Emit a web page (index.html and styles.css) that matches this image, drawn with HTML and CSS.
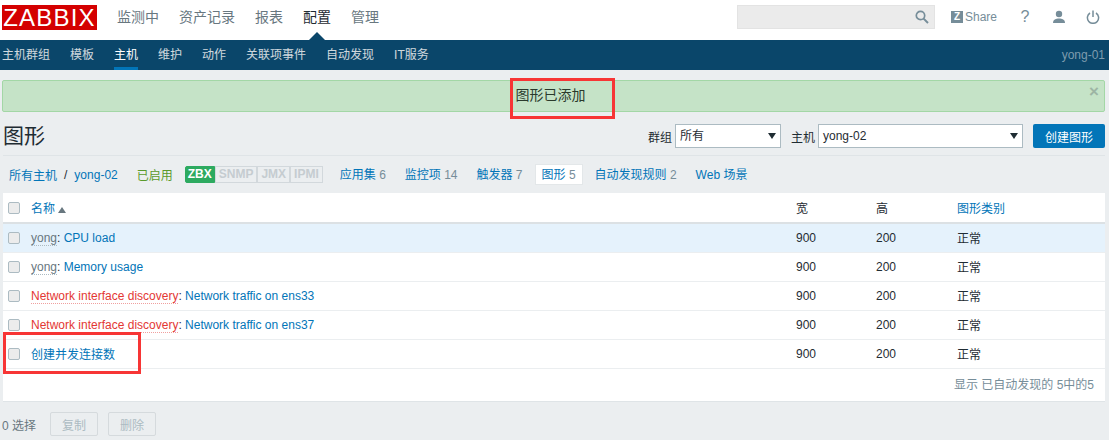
FILE: index.html
```html
<!DOCTYPE html>
<html lang="zh">
<head>
    <meta charset="UTF-8">
    <title>图形</title>
    <link rel="stylesheet" href="styles.css">
</head>
<body>
    <header class="top-bar">
        <div class="logo">ZABBIX</div>
        <nav class="top-menu">
            <a>监测中</a>
            <a>资产记录</a>
            <a>报表</a>
            <a class="active">配置</a>
            <a>管理</a>
        </nav>
        <div class="top-tools">
            <div class="search">
                <svg width="14" height="14" viewBox="0 0 14 14"><circle cx="5.5" cy="5.5" r="4.2" fill="none" stroke="#768d99" stroke-width="1.7"/><path d="M8.6 8.6 L13 13" stroke="#768d99" stroke-width="2"/></svg>
            </div>
            <a class="share"><span class="share-z">Z</span>Share</a>
            <a class="tool-icon help">?</a>
            <a class="tool-icon">
                <svg width="14" height="14" viewBox="0 0 14 14"><circle cx="7" cy="4" r="3.2" fill="#768d99"/><path d="M1 13 C1 9.2 4 8.4 7 8.4 C10 8.4 13 9.2 13 13 Z" fill="#768d99"/></svg>
            </a>
            <a class="tool-icon">
                <svg width="14" height="14" viewBox="0 0 14 14"><path d="M4 3 A5.6 5.6 0 1 0 10 3" fill="none" stroke="#768d99" stroke-width="1.5"/><path d="M7 0.5 V7" stroke="#768d99" stroke-width="1.5"/></svg>
            </a>
        </div>
    </header>

    <nav class="sub-menu">
        <a>主机群组</a>
        <a>模板</a>
        <a class="active">主机</a>
        <a>维护</a>
        <a>动作</a>
        <a>关联项事件</a>
        <a>自动发现</a>
        <a>IT服务</a>
        <span class="server-name">yong-01</span>
    </nav>

    <div class="msg-good">图形已添加<span class="msg-close">×</span></div>

    <div class="title-row">
        <h1>图形</h1>
        <div class="filters">
            <label>群组</label>
            <div class="select group-select">所有<i class="arrow"></i></div>
            <label>主机</label>
            <div class="select host-select">yong-02<i class="arrow"></i></div>
            <button class="btn-create">创建图形</button>
        </div>
    </div>

    <div class="tabs">
        <a class="crumb">所有主机</a><span class="slash">/</span><a class="crumb">yong-02</a>
        <span class="enabled">已启用</span>
        <div class="badges">
            <span class="badge on">ZBX</span><span class="badge">SNMP</span><span class="badge">JMX</span><span class="badge">IPMI</span>
        </div>
        <a class="tab">应用集 <em>6</em></a>
        <a class="tab">监控项 <em>14</em></a>
        <a class="tab">触发器 <em>7</em></a>
        <a class="tab current">图形 <em>5</em></a>
        <a class="tab">自动发现规则 <em>2</em></a>
        <a class="tab">Web 场景</a>
    </div>

    <div class="table-wrap">
        <table>
            <thead>
                <tr>
                    <th class="col-check"><span class="check"></span></th>
                    <th class="col-name"><a>名称</a><i class="sort-up"></i></th>
                    <th class="col-width">宽</th>
                    <th class="col-height">高</th>
                    <th><a>图形类别</a></th>
                </tr>
            </thead>
            <tbody>
                <tr class="hover">
                    <td><span class="check"></span></td>
                    <td><a class="parent">yong</a>: <a>CPU load</a></td>
                    <td>900</td><td>200</td><td>正常</td>
                </tr>
                <tr>
                    <td><span class="check"></span></td>
                    <td><a class="parent">yong</a>: <a>Memory usage</a></td>
                    <td>900</td><td>200</td><td>正常</td>
                </tr>
                <tr>
                    <td><span class="check"></span></td>
                    <td><a class="parent red">Network interface discovery</a>: <a>Network traffic on ens33</a></td>
                    <td>900</td><td>200</td><td>正常</td>
                </tr>
                <tr>
                    <td><span class="check"></span></td>
                    <td><a class="parent red">Network interface discovery</a>: <a>Network traffic on ens37</a></td>
                    <td>900</td><td>200</td><td>正常</td>
                </tr>
                <tr>
                    <td><span class="check"></span></td>
                    <td><a>创建并发连接数</a></td>
                    <td>900</td><td>200</td><td>正常</td>
                </tr>
            </tbody>
        </table>
        <div class="table-stats">显示 已自动发现的 5中的5</div>
    </div>

    <div class="actions">
        <span>0 选择</span>
        <button disabled>复制</button>
        <button disabled>删除</button>
    </div>

    <!-- red marks drawn over the screenshot -->
    <div class="mark mark-msg"></div>
    <div class="mark mark-row"></div>
</body>
</html>
```

FILE: styles.css
```css
* {
    box-sizing: border-box;
}
body {
    margin: 0;
    height: 440px;
    overflow: hidden;
    position: relative;
    background: #ebeef0;
    color: #1f2c33;
    font-family: "Liberation Sans", Arial, "Noto Sans CJK SC", sans-serif;
    font-size: 12px;
}
a {
    color: #0275b8;
}

/* top bar */
.top-bar {
    height: 40px;
    background: #fff;
    display: flex;
    align-items: flex-start;
    padding-left: 2px;
}
.logo {
    width: 95px;
    height: 25px;
    margin-top: 5px;
    background: #d40000;
    color: #fff;
    font-size: 24px;
    line-height: 25px;
    text-align: center;
    letter-spacing: 1.2px;
}
.top-menu {
    display: flex;
    gap: 20px;
    margin-left: 20px;
    line-height: 34px;
    font-size: 14px;
}
.top-menu a {
    color: #68777f;
    position: relative;
    height: 40px;
}
.top-menu a.active {
    color: #1f2c33;
}
.top-menu a.active::after {
    content: "";
    position: absolute;
    left: 50%;
    bottom: 0;
    margin-left: -8px;
    border: 8px solid transparent;
    border-top: 0;
    border-bottom-color: #0a466a;
}
.top-tools {
    margin-left: auto;
    display: flex;
    align-items: center;
    height: 34px;
}
.search {
    width: 198px;
    height: 24px;
    background: #ebebeb;
    border: 1px solid #e3e3e3;
    display: flex;
    align-items: center;
    justify-content: flex-end;
    padding-right: 5px;
}
.share {
    display: flex;
    align-items: center;
    margin-left: 16px;
    color: #768d99;
    font-size: 12px;
}
.share-z {
    width: 12px;
    height: 12px;
    margin-right: 2px;
    background: #768d99;
    color: #fff;
    font-size: 10px;
    font-weight: bold;
    line-height: 12px;
    text-align: center;
}
.tool-icon {
    display: flex;
    justify-content: center;
    width: 14px;
    margin-left: 20px;
    color: #768d99;
}
.tool-icon.help {
    margin-left: 21px;
    font-size: 16px;
}
.tool-icon:last-child {
    margin-right: 9px;
}

/* second level menu */
.sub-menu {
    height: 30px;
    background: #0a466a;
    display: flex;
    gap: 20px;
    padding-left: 2px;
    line-height: 31px;
    font-size: 12px;
}
.sub-menu a {
    color: #f2f2f2;
    opacity: 0.85;
    height: 30px;
}
.sub-menu a.active {
    opacity: 1;
    color: #fff;
    border-bottom: 3px solid #0275b8;
}
.server-name {
    margin-left: auto;
    margin-right: 4px;
    color: #7e9cae;
}

/* message */
.msg-good {
    position: relative;
    margin: 10px 4px 0 2px;
    height: 32px;
    padding-right: 6px;
    background: #c5e3c7;
    border: 1px solid #a3d7a6;
    border-radius: 2px;
    line-height: 29px;
    text-align: center;
    font-size: 14px;
    color: #2a3a2c;
}
.msg-close {
    position: absolute;
    right: 5px;
    top: -4px;
    color: #9db5a4;
    font-size: 17px;
    font-weight: bold;
}

/* title and filters */
.title-row {
    display: flex;
    justify-content: space-between;
    align-items: flex-start;
    height: 44px;
    padding-top: 12px;
    margin: 0 4px 0 3px;
    border-bottom: 1px solid #dfe4e7;
}
h1 {
    margin: 0;
    font-size: 21px;
    line-height: 24px;
    font-weight: normal;
}
.filters {
    display: flex;
    align-items: center;
    font-size: 12px;
    color: #1f2c33;
}
.filters label {
    margin-right: 3px;
}
.select {
    position: relative;
    height: 24px;
    background: #fff;
    border: 1px solid #acbbc2;
    line-height: 22px;
    padding-left: 4px;
    color: #1f2c33;
}
.group-select {
    width: 106px;
    margin-right: 10px;
}
.host-select {
    width: 205px;
    margin-right: 10px;
}
.arrow {
    position: absolute;
    right: 4px;
    top: 8px;
    border: 4px solid transparent;
    border-top: 6px solid #1f2c33;
    border-bottom: 0;
}
.btn-create {
    width: 72px;
    height: 24px;
    padding: 0;
    border: 0;
    border-radius: 2px;
    background: #0275b8;
    color: #fff;
    font: inherit;
}

/* host tabs */
.tabs {
    display: flex;
    align-items: center;
    height: 37px;
    padding-left: 9px;
    font-size: 12px;
}
.slash {
    margin: 0 7px;
    color: #1f2c33;
}
.enabled {
    margin-left: 19px;
    color: #5a9a2c;
}
.badges {
    display: flex;
    margin-left: 12px;
    margin-right: 5px;
}
.badge {
    height: 17px;
    padding: 0 3px;
    border: 1px solid #d2d8dc;
    color: #c5ccd0;
    font-weight: bold;
    font-size: 12px;
    line-height: 15px;
}
.badge.on {
    padding: 0 2px;
    background: #2daa60;
    border-color: #2daa60;
    color: #fff;
    border-radius: 2px 0 0 2px;
}
.tab {
    height: 21px;
    line-height: 20px;
    padding: 0 6px;
    margin-left: 5px;
    border: 1px solid transparent;
}
.tab.current {
    background: #fff;
    border-color: #e3e7e9;
}
.tab em {
    font-style: normal;
    color: #768d99;
}

/* table */
.table-wrap {
    margin: 0 4px 0 3px;
    background: #fff;
    border-bottom: 1px solid #dfe4e7;
    height: 209px;
}
table {
    width: 100%;
    border-collapse: collapse;
    table-layout: fixed;
    font-size: 12px;
}
th {
    height: 30px;
    text-align: left;
    font-weight: normal;
    border-bottom: 2px solid #dce1e4;
    padding: 0;
    color: #1f2c33;
}
th.col-check {
    width: 28px;
}
th.col-name {
    width: 765px;
}
th.col-width {
    width: 80px;
}
th.col-height {
    width: 81px;
}
td {
    height: 29px;
    padding: 0;
    border-bottom: 1px solid #ebeef0;
}
.hover td {
    background: #e5f2fc;
}
.check {
    display: block;
    width: 12px;
    height: 12px;
    margin-left: 5px;
    background: #ececec;
    border: 1px solid #acbbc2;
    border-radius: 2px;
}
.parent {
    color: #68777f;
    border-bottom: 1px dotted #acbbc2;
}
.parent.red {
    color: #e33734;
    border-bottom-color: #f0a09f;
}
.sort-up {
    display: inline-block;
    margin-left: 3px;
    border: 4px solid transparent;
    border-top: 0;
    border-bottom: 6px solid #68777f;
}
.table-stats {
    height: 32px;
    line-height: 32px;
    padding-right: 11px;
    text-align: right;
    color: #768d99;
}

/* bottom actions */
.actions {
    display: flex;
    align-items: center;
    gap: 10px;
    height: 24px;
    margin-top: 10px;
    padding-left: 2px;
    color: #68777f;
}
.actions span {
    margin-right: 4px;
}
.actions button {
    width: 48px;
    height: 24px;
    padding: 0;
    background: #ebeef0;
    border: 1px solid #d5dadd;
    border-radius: 2px;
    color: #acbbc2;
    font: inherit;
}

/* annotations */
.mark {
    position: absolute;
    border: 3px solid #f73535;
}
.mark-msg {
    left: 510px;
    top: 78px;
    width: 105px;
    height: 41px;
}
.mark-row {
    left: 3px;
    top: 332px;
    width: 138px;
    height: 42px;
}
```
